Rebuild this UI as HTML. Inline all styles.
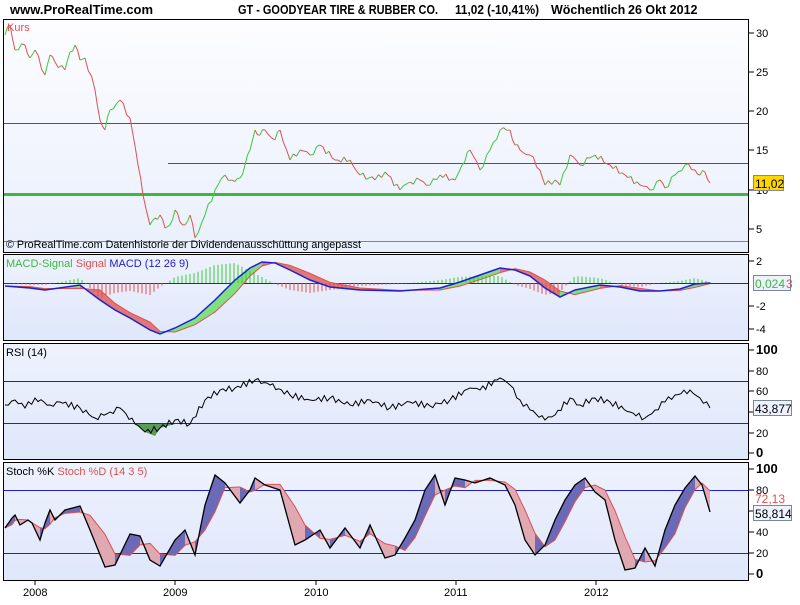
<!DOCTYPE html>
<html><head><meta charset="utf-8">
<style>
body{margin:0;width:800px;height:600px;background:#fff;overflow:hidden;font-family:"Liberation Sans",sans-serif;}
svg text{font-family:"Liberation Sans",sans-serif;}
</style></head><body>
<svg id="s" width="800" height="600" xmlns="http://www.w3.org/2000/svg">
<defs>
<linearGradient id="g1" x1="0" y1="0" x2="0" y2="1"><stop offset="0" stop-color="#fdfdff"/><stop offset="1" stop-color="#e9effc"/></linearGradient>
<linearGradient id="g2" x1="0" y1="0" x2="0" y2="1"><stop offset="0" stop-color="#eef2fd"/><stop offset="1" stop-color="#dfe7fb"/></linearGradient>
</defs>
<text x="10" y="14" font-size="13" font-weight="bold">www.ProRealTime.com</text>
<text x="238" y="14" font-size="12.5" font-weight="bold" textLength="200" lengthAdjust="spacingAndGlyphs">GT - GOODYEAR TIRE &amp; RUBBER CO.</text>
<text x="455" y="14" font-size="12.5" font-weight="bold" textLength="84" lengthAdjust="spacingAndGlyphs">11,02 (-10,41%)</text>
<text x="551" y="14" font-size="12.5" font-weight="bold">Wöchentlich</text>
<text x="628" y="14" font-size="12.5" font-weight="bold">26 Okt 2012</text>
<rect x="3.5" y="19.5" width="745" height="233" fill="url(#g1)" stroke="#000"/>
<rect x="3.5" y="254.5" width="745" height="86" fill="url(#g2)" stroke="#000"/>
<rect x="3.5" y="343.5" width="745" height="116" fill="url(#g2)" stroke="#000"/>
<rect x="3.5" y="462.5" width="745" height="118" fill="url(#g2)" stroke="#000"/>
<g id="d"></g>
<text x="7" y="31" font-size="11" fill="#e05050">Kurs</text>
<text x="6" y="248" font-size="11" textLength="355" lengthAdjust="spacingAndGlyphs">© ProRealTime.com  Datenhistorie der Dividendenausschüttung angepasst</text>
<text x="6" y="267" font-size="11"><tspan fill="#3cb83c">MACD-Signal</tspan> <tspan fill="#e05050">Signal</tspan> <tspan fill="#2020d0">MACD (12 26 9)</tspan></text>
<text x="6" y="356" font-size="11">RSI (14)</text>
<text x="6" y="475" font-size="11">Stoch %K <tspan fill="#e05050">Stoch %D (14 3 5)</tspan></text>
<g font-size="11" id="ax"></g>
<rect x="753.5" y="175.5" width="30" height="15" fill="#ffd700" stroke="#889"/><text x="755" y="188" font-size="12">11,02</text>
<rect x="753.5" y="275.5" width="37" height="15" fill="#eef2fd" stroke="#789"/><text x="755" y="288" font-size="12" fill="#3cb83c">0,024</text><text x="786" y="288" font-size="12" fill="#e05050">3</text>
<rect x="753.5" y="400.5" width="38" height="15" fill="#eef2fd" stroke="#789"/><text x="755" y="413" font-size="12">43,877</text>
<text x="755" y="503" font-size="12" fill="#e05050">72,13</text>
<rect x="753.5" y="505.5" width="38" height="15" fill="#eef2fd" stroke="#789"/><text x="755" y="518" font-size="12">58,814</text>
<g font-size="11"><text x="23" y="596">2008</text><text x="163" y="596">2009</text><text x="304" y="596">2010</text><text x="444" y="596">2011</text><text x="584" y="596">2012</text></g>
</svg>
<script>
var d=document.getElementById('d'),h='';
function L(x1,y1,x2,y2,c,w){h+='<line x1="'+x1+'" y1="'+y1+'" x2="'+x2+'" y2="'+y2+'" stroke="'+c+'" stroke-width="'+(w||1)+'"/>';}
function P(pts,c,w,f){h+='<polyline points="'+pts.map(function(p){return p.join(',')}).join(' ')+'" fill="'+(f||'none')+'" stroke="'+c+'" stroke-width="'+(w||1)+'"/>';}
L(4,123.5,748,123.5,'#555');L(168,163.5,748,163.5,'#555');L(4,194.5,748,194.5,'#3cb83c',3);L(4,241.5,748,241.5,'#3cb83c');
var pr=[[5,35],[10,25],[15,50],[25,45],[30,58],[35,50],[45,75],[50,55],[55,62],[65,70],[70,52],[75,45],[80,60],[85,58],[95,90],[100,120],[105,130],[110,110],[120,100],[130,118],[138,165],[143,195],[150,225],[155,218],[160,215],[165,228],[170,225],[175,210],[180,222],[185,225],[190,215],[195,238],[205,215],[215,190],[225,175],[232,180],[240,178],[245,165],[250,150],[255,130],[260,135],[265,130],[275,140],[280,130],[290,160],[300,150],[310,155],[320,145],[335,160],[350,160],[360,175],[375,180],[385,172],[400,190],[410,182],[420,180],[430,185],[440,175],[455,180],[462,165],[470,150],[480,170],[490,150],[500,130],[510,130],[515,145],[520,150],[530,155],[540,170],[545,185],[555,180],[560,185],[570,155],[580,165],[590,158],[595,155],[610,165],[625,175],[640,185],[650,190],[660,180],[665,188],[675,175],[685,165],[695,170],[700,175],[705,172],[710,183]];
var pj=[];for(var i=1;i<pr.length;i++){var a=pr[i-1],b=pr[i],n=Math.max(1,Math.round((b[0]-a[0])/3));for(var k=0;k<n;k++){var t=k/n;pj.push([a[0]+t*(b[0]-a[0]),a[1]+t*(b[1]-a[1])+(k?Math.sin(a[0]*1.7+k*2.3)*3:0)]);}}pj.push(pr[pr.length-1]);
for(var i=1;i<pj.length;i++){L(pj[i-1][0],pj[i-1][1],pj[i][0],pj[i][1],pj[i][1]<pj[i-1][1]?'#3cc83c':'#e05050');}
L(4,283.5,748,283.5,'#2020d0');
var m=[[5,286],[30,288],[45,290],[80,285],[100,300],[115,310],[130,318],[150,330],[160,334],[175,328],[195,318],[215,300],[235,280],[250,268],[262,262],[275,263],[290,270],[310,280],[330,287],[360,290],[400,291],[440,288],[460,282],[480,275],[500,268],[515,270],[530,276],[545,288],[560,297],[575,290],[600,285],[620,287],[640,291],[660,291],[680,289],[695,284],[710,283]];
var sg=m.map(function(p,i){var j=Math.max(0,i-1);return [p[0],(p[1]+m[j][1]*2)/3];});
for(var i=1;i<m.length;i++){var up=m[i][1]<sg[i][1];h+='<polygon points="'+m[i-1].join(',')+' '+m[i].join(',')+' '+sg[i].join(',')+' '+sg[i-1].join(',')+'" fill="'+(up?'#7ee07e':'#e07878')+'"/>';}
for(var x=6;x<712;x+=4){var k=0;for(var i=1;i<m.length;i++)if(m[i][0]>=x){var t=(x-m[i-1][0])/(m[i][0]-m[i-1][0]);var a=m[i-1][1]+t*(m[i][1]-m[i-1][1]);var b=sg[i-1][1]+t*(sg[i][1]-sg[i-1][1]);k=(a-b)*1.5;break;}L(x,283,x,283+k,k<0?'#3cc83c':'#e05050');}
P(sg,'#e05050');P(m,'#2020d0',1.5);
L(4,381.5,748,381.5,'#2020d0');L(4,423.5,748,423.5,'#2020d0');
var r=[[5,405],[15,400],[25,408],[35,398],[50,405],[60,402],[80,408],[95,418],[110,412],[120,408],[135,424],[145,432],[160,428],[175,420],[190,424],[205,400],[220,390],[235,388],[255,380],[270,385],[290,395],[310,400],[330,398],[350,405],[370,400],[390,408],[410,402],[430,406],[450,400],[470,388],[480,390],[500,378],[510,385],[520,400],[530,410],[545,420],[555,415],[570,398],[580,405],[595,398],[610,402],[630,412],[645,418],[655,410],[665,402],[675,395],[690,390],[700,398],[710,408]];
var rj=[];for(var i=1;i<r.length;i++){var a=r[i-1],b=r[i],n=Math.max(1,Math.round((b[0]-a[0])/3));for(var k=0;k<n;k++){var t=k/n;rj.push([a[0]+t*(b[0]-a[0]),a[1]+t*(b[1]-a[1])+(k?Math.sin(a[0]*2.1+k*2.7)*3:0)]);}}rj.push(r[r.length-1]);
h+='<polygon points="135,424 145,432 155,436 160,428 175,424" fill="#5a9a5a"/>';P(rj,'#000');
L(4,490.5,748,490.5,'#2020d0');L(4,553.5,748,553.5,'#2020d0');
var s=[[5,528],[12,518],[15,515],[20,525],[28,520],[32,523],[40,540],[45,523],[50,510],[55,520],[65,510],[80,506],[90,530],[105,567],[115,565],[130,534],[140,536],[150,560],[160,566],[175,540],[185,530],[195,555],[205,505],[215,475],[225,483],[240,503],[250,490],[255,478],[265,485],[280,490],[295,545],[305,540],[320,530],[330,548],[345,528],[360,548],[370,525],[385,558],[395,555],[405,538],[415,520],[425,490],[435,475],[445,505],[455,478],[465,480],[475,483],[490,478],[505,485],[515,505],[525,540],[535,555],[545,545],[555,520],[565,500],[575,485],[585,478],[595,492],[605,500],[615,540],[625,570],[635,568],[645,548],[655,566],[665,530],[675,505],[685,488],[695,476],[702,485],[710,512]];
var sd=s.map(function(p,i){var j=Math.max(0,i-1),k2=Math.max(0,i-2);return [p[0],(p[1]+s[j][1]+s[k2][1])/3];});
for(var i=1;i<s.length;i++){var up=s[i][1]<sd[i][1];h+='<polygon points="'+s[i-1].join(',')+' '+s[i].join(',')+' '+sd[i].join(',')+' '+sd[i-1].join(',')+'" fill="'+(up?'#6a6ab8':'#e0a8b0')+'"/>';}
P(sd,'#e05050',1,'none');P(s,'#000',1.3);
var ax='';function T(y,t,b){ax+='<line x1="748" y1="'+y+'" x2="754" y2="'+y+'" stroke="#000"/><text x="756" y="'+(y+4)+'"'+(b?' font-weight="bold" font-size="13"':'')+'>'+t+'</text>';}
[[33,'30'],[72,'25'],[111,'20'],[150,'15'],[190,'10'],[229,'5']].forEach(function(a){T(a[0],a[1]);});
[[261,'2'],[306,'-2'],[329,'-4']].forEach(function(a){T(a[0],a[1]);});
T(350,'100',1);T(371,'80');T(391,'60');T(412,'40');T(433,'20');T(453,'0',1);
T(469,'100',1);T(490,'80');T(511,'60');T(532,'40');T(553,'20');T(574,'0',1);
[35,175,316,456,596].forEach(function(x){ax+='<line x1="'+x+'" y1="581" x2="'+x+'" y2="585" stroke="#000"/>';});
document.getElementById('ax').innerHTML=ax;
d.innerHTML=h;
</script>
</body></html>
